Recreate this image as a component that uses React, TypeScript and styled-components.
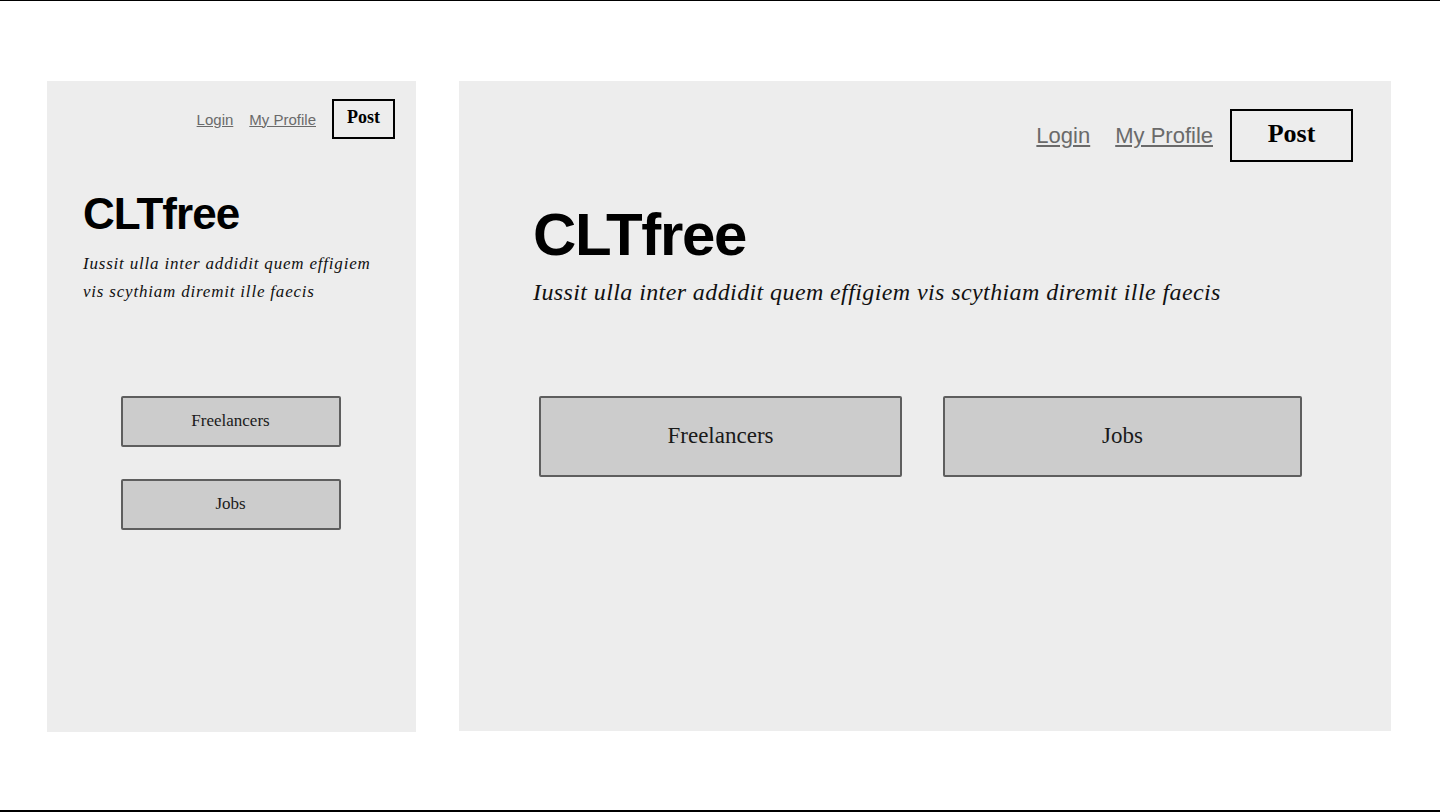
import React from 'react'
import styled, { createGlobalStyle } from 'styled-components'

const GlobalStyle = createGlobalStyle`
  * {
    box-sizing: border-box;
  }
  body {
    margin: 0;
    background: #ffffff;
    font-family: "Liberation Sans", Arial, sans-serif;
  }
`

type Size = 'mobile' | 'desktop'

const sizes = {
  mobile: {
    width: 369,
    height: 651,
    padTop: 18,
    padRight: 21,
    padLeft: 36,
    linkFont: 15,
    loginGap: 16,
    profileGap: 16,
    postW: 63,
    postH: 40,
    postFont: 18,
    titleFont: 44,
    titleTop: 53,
    subFont: 17,
    subSpacing: 0.8,
    subLine: 28,
    subTop: 14,
    subRight: 15,
    btnTop: 90,
  },
  desktop: {
    width: 932,
    height: 650,
    padTop: 28,
    padRight: 38,
    padLeft: 74,
    linkFont: 22,
    loginGap: 25,
    profileGap: 17,
    postW: 123,
    postH: 53,
    postFont: 26,
    titleFont: 60,
    titleTop: 43,
    subFont: 24,
    subSpacing: 0.4,
    subLine: 28,
    subTop: 13,
    subRight: 40,
    btnTop: 90,
  },
}

// styled components
const Frame = styled.div`
  height: 812px;
  border-top: 1px solid #000;
  border-bottom: 2px solid #000;
  display: flex;
  align-items: flex-start;
  gap: 43px;
  padding: 80px 0 0 47px;
`

const Panel = styled.section<{ $size: Size }>`
  width: ${(p) => sizes[p.$size].width}px;
  height: ${(p) => sizes[p.$size].height}px;
  background: #ededed;
  display: flex;
  flex-direction: column;
  padding: ${(p) => sizes[p.$size].padTop}px ${(p) => sizes[p.$size].padRight}px 0
    ${(p) => sizes[p.$size].padLeft}px;
`

const Nav = styled.nav`
  display: flex;
  justify-content: flex-end;
  align-items: center;
`

const NavLink = styled.a<{ $size: Size; $gap: number }>`
  font-family: "Liberation Sans", Arial, sans-serif;
  font-size: ${(p) => sizes[p.$size].linkFont}px;
  color: #6a6a6a;
  text-decoration: underline;
  margin-right: ${(p) => p.$gap}px;
  cursor: pointer;
`

const PostButton = styled.button<{ $size: Size }>`
  width: ${(p) => sizes[p.$size].postW}px;
  height: ${(p) => sizes[p.$size].postH}px;
  border: 2px solid #000;
  background: transparent;
  font-family: "Liberation Serif", "Times New Roman", serif;
  font-weight: 700;
  font-size: ${(p) => sizes[p.$size].postFont}px;
  color: #000;
  padding: 0 0 4px;
  cursor: pointer;
`

const Title = styled.h1<{ $size: Size }>`
  margin: ${(p) => sizes[p.$size].titleTop}px 0 0;
  font-family: "Liberation Sans", Arial, sans-serif;
  font-weight: 700;
  font-size: ${(p) => sizes[p.$size].titleFont}px;
  line-height: 1;
  letter-spacing: -0.022em;
  color: #000;
`

const Tagline = styled.p<{ $size: Size }>`
  margin: ${(p) => sizes[p.$size].subTop}px ${(p) => sizes[p.$size].subRight}px 0 0;
  font-family: "Liberation Serif", "Times New Roman", serif;
  font-style: italic;
  font-size: ${(p) => sizes[p.$size].subFont}px;
  letter-spacing: ${(p) => sizes[p.$size].subSpacing}px;
  line-height: ${(p) => sizes[p.$size].subLine}px;
  color: #111;
`

const Actions = styled.div<{ $size: Size }>`
  margin-top: ${(p) => sizes[p.$size].btnTop}px;
  display: flex;
  flex-direction: ${(p) => (p.$size === 'mobile' ? 'column' : 'row')};
  align-items: ${(p) => (p.$size === 'mobile' ? 'center' : 'flex-start')};
  gap: ${(p) => (p.$size === 'mobile' ? 32 : 41)}px;
  margin-left: ${(p) => (p.$size === 'mobile' ? -38 : 6)}px;
  margin-right: ${(p) => (p.$size === 'mobile' ? -21 : 0)}px;
`

const ActionButton = styled.button<{ $size: Size; $w: number }>`
  width: ${(p) => p.$w}px;
  height: ${(p) => (p.$size === 'mobile' ? 51 : 81)}px;
  background: #cccccc;
  border: 2px solid #5e5e5e;
  border-radius: 2px;
  font-family: "Liberation Serif", "Times New Roman", serif;
  font-size: ${(p) => (p.$size === 'mobile' ? 17 : 23)}px;
  color: #1a1a1a;
  padding: 0 0 2px;
  cursor: pointer;
`

const Screen = ({ size }: { size: Size }) => {
  const mobile = size === 'mobile'
  return (
    <Panel $size={size}>
      <Nav>
        <NavLink $size={size} $gap={sizes[size].loginGap}>Login</NavLink>
        <NavLink $size={size} $gap={sizes[size].profileGap}>My Profile</NavLink>
        <PostButton $size={size}>Post</PostButton>
      </Nav>
      <Title $size={size}>CLTfree</Title>
      <Tagline $size={size}>
        Iussit ulla inter addidit quem effigiem vis scythiam diremit ille faecis
      </Tagline>
      <Actions $size={size}>
        <ActionButton $size={size} $w={mobile ? 220 : 363}>Freelancers</ActionButton>
        <ActionButton $size={size} $w={mobile ? 220 : 359}>Jobs</ActionButton>
      </Actions>
    </Panel>
  )
}

const App = () => {
  return (
    <>
      <GlobalStyle />
      <Frame>
        <Screen size="mobile" />
        <Screen size="desktop" />
      </Frame>
    </>
  )
}

export default App
